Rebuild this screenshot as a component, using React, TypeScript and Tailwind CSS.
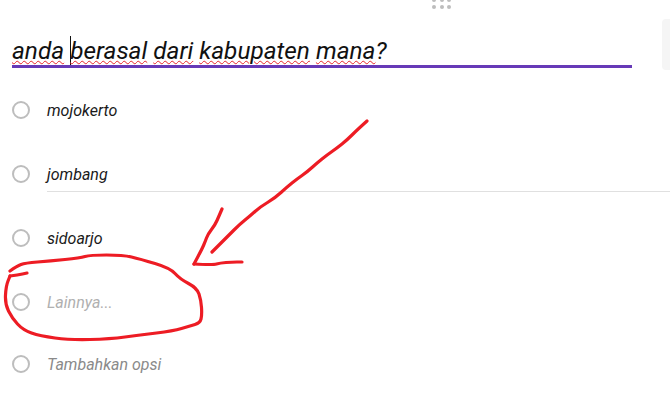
import React from "react";

const options = [
  { label: "mojokerto", color: "text-[#1a1a1a]", h: "h-16" },
  { label: "jombang", color: "text-[#1a1a1a]", h: "h-16", line: true },
  { label: "sidoarjo", color: "text-[#1a1a1a]", h: "h-16" },
  { label: "Lainnya...", color: "text-[#b0b0b0]", h: "h-16" },
  { label: "Tambahkan opsi", color: "text-[#8a8a8a]", h: "h-[60px]" },
];

// marker strokes, as traced points
const strokes: number[][][] = [
  [[367, 121], [357, 130], [347, 140], [337, 148], [327, 155], [317, 163], [307, 172], [297, 179], [287, 187], [275, 198], [260, 207], [250, 216], [240, 224], [228, 236], [212, 252]],
  [[222, 209], [219, 216], [215, 225], [208, 234], [205, 242], [202, 249], [194, 264]],
  [[194, 264], [213, 265], [220, 263], [232, 262], [242, 262]],
  [[10, 271], [17, 266], [25, 263], [50, 261], [80, 258], [90, 255], [123, 255], [140, 259], [170, 268], [180, 279], [197, 288], [201, 300], [202, 315], [200, 323], [190, 326], [173, 331], [140, 335], [110, 339], [70, 340], [40, 336], [23, 330], [12, 318], [5, 304], [6, 286], [10, 276]],
  [[10, 276], [18, 275], [27, 273]],
];

function smooth(pts: number[][]) {
  let d = `M${pts[0][0]} ${pts[0][1]}`;
  for (let i = 1; i < pts.length - 1; i++) {
    const mx = (pts[i][0] + pts[i + 1][0]) / 2;
    const my = (pts[i][1] + pts[i + 1][1]) / 2;
    d += `Q${pts[i][0]} ${pts[i][1]} ${mx} ${my}`;
  }
  const last = pts[pts.length - 1];
  return d + `L${last[0]} ${last[1]}`;
}

function Word({ children }: { children: React.ReactNode }) {
  return (
    <span className="underline decoration-wavy decoration-[#e8262a] decoration-1 underline-offset-[1px]">
      {children}
    </span>
  );
}

export default function App() {
  return (
    <div className="relative w-[670px] h-[408px] overflow-hidden bg-white font-['Roboto',sans-serif] italic flex flex-col">
      {/* drag handle */}
      <div className="ml-[432px] -mt-[2px] w-[19px] h-[11px] grid grid-cols-3 gap-x-[3.5px] gap-y-[3px]">
        {[0, 1, 2, 3, 4, 5].map((i) => (
          <span key={i} className="w-[4px] h-[4px] rounded-full bg-[#bdbdbd]" />
        ))}
      </div>
      {/* next panel edge */}
      <div className="absolute left-[662px] top-[19px] w-[20px] h-[51px] rounded-[4px] bg-[#f5f5f5]" />

      <div className="pl-[12px] pt-[25px]">
        <div className="w-[620px] h-[34px] border-b-[3px] border-[#673ab7] text-[24.4px] leading-[34px] text-[#111111] whitespace-nowrap">
          <Word>anda</Word>{" "}
          <span className="inline-block w-px h-[29px] -mr-px align-[-6px] bg-[#111111]" />
          <Word>berasal</Word> <Word>dari</Word> <Word>kabupaten</Word> <Word>mana</Word>?
        </div>

        <div className="pt-[10px]">
          {options.map((o) => (
            <div key={o.label} className={`flex items-center ${o.h}`}>
              <span className="w-[18px] h-[18px] rounded-full border-2 border-[#bdbdbd] shrink-0" />
              <div className={`ml-[17px] mt-[2px] flex-1 h-[34px] flex items-center text-[16px] ${o.color} ${o.line ? "border-b border-[#e0e0e0]" : ""}`}>
                {o.label}
              </div>
            </div>
          ))}
        </div>
      </div>

      {/* red marker scribble */}
      <svg className="absolute inset-0" width="670" height="408" fill="none" stroke="#ed1c24" strokeWidth="3.2" strokeLinejoin="round" strokeLinecap="round">
        {strokes.map((s, i) => (
          <path key={i} d={smooth(s)} />
        ))}
      </svg>
    </div>
  );
}
